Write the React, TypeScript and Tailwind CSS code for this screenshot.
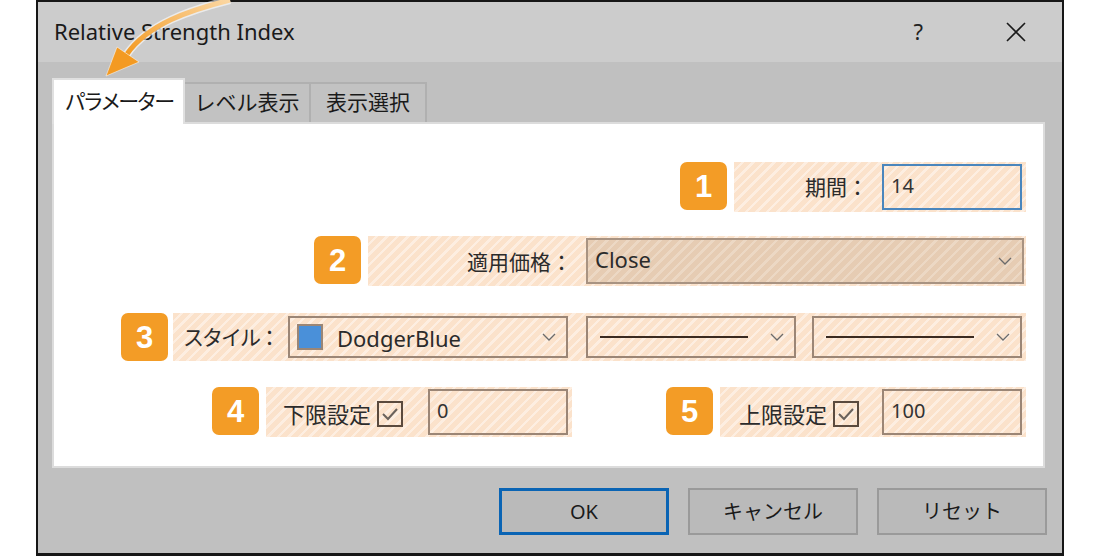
import React from 'react'

const font = "font-['Noto_Sans','Noto_Sans_CJK_JP',sans-serif]"

const hatch =
    'bg-[repeating-linear-gradient(135deg,#fbe2cb_0px,#fbe2cb_5px,#fdeee1_5px,#fdeee1_7.5px)]'
const hatchDark =
    'bg-[repeating-linear-gradient(135deg,#e6ccb3_0px,#e6ccb3_5px,#ecd8c4_5px,#ecd8c4_7.5px)]'

function Badge({ n }: { n: number }) {
    return (
        <div className="flex h-[48px] w-[47px] shrink-0 items-center justify-center rounded-[7px] bg-[#f39c26] text-[31px] font-bold leading-none text-white font-['Liberation_Sans',sans-serif]">
            {n}
        </div>
    )
}

function Chevron() {
    return (
        <svg width="14" height="8" viewBox="0 0 14 8" className="shrink-0">
            <path d="M1 1 L7 7 L13 1" fill="none" stroke="#6b6b6b" strokeWidth="1.3" />
        </svg>
    )
}

function Check() {
    return (
        <div className="flex h-[26px] w-[26px] shrink-0 items-center justify-center border-2 border-[#5a4a3e]">
            <svg width="18" height="14" viewBox="0 0 18 14">
                <path d="M2 7 L7 12 L16 2" fill="none" stroke="#6a625c" strokeWidth="2" />
            </svg>
        </div>
    )
}

function ValueBox({ value, blue }: { value: string; blue?: boolean }) {
    return (
        <div
            className={`flex h-[46px] w-[140px] shrink-0 items-start pl-[7px] pt-[8px] text-[20px] leading-[24px] text-[#333] ${
                blue ? 'border-2 border-[#4a86bd]' : 'border-2 border-[#9b8676]'
            }`}
        >
            {value}
        </div>
    )
}

function LineSelect() {
    return (
        <div className="flex h-[42px] w-[210px] shrink-0 items-center justify-between border-2 border-[#9b8676] pl-[12px] pr-[10px]">
            <div className="h-[2px] w-[148px] bg-[#3a2a20]" />
            <Chevron />
        </div>
    )
}

function TabButton({ label, active, width }: { label: string; active?: boolean; width: string }) {
    if (active) {
        return (
            <div className={`relative z-10 -mb-[2px] flex h-[46px] items-start justify-center border-2 border-b-0 border-[#e0e0e0] bg-white pt-[6px] text-[21px] tracking-[-3px] text-[#1a1a1a] ${width}`}>
                {label}
            </div>
        )
    }
    return (
        <div className={`flex h-[40px] items-start justify-center border-2 border-l-0 border-b-0 border-[#b0b0b0] bg-[#c2c2c2] pt-[3px] text-[21px] text-[#1a1a1a] ${width}`}>
            {label}
        </div>
    )
}

function Button({ label, primary }: { label: string; primary?: boolean }) {
    return (
        <div
            className={`flex h-[47px] w-[170px] items-center justify-center bg-[#bababa] text-[20px] text-[#1a1a1a] ${
                primary ? 'border-[3px] border-[#0a64b4]' : 'border-2 border-[#9a9a9a]'
            }`}
        >
            {label}
        </div>
    )
}

function Arrow() {
    return (
        <svg className="pointer-events-none absolute left-0 top-0" width="260" height="90" viewBox="0 0 260 90">
            <defs>
                <linearGradient id="arr" x1="1" y1="0" x2="0" y2="1">
                    <stop offset="0" stopColor="#fbd7a3" />
                    <stop offset="1" stopColor="#f39a22" />
                </linearGradient>
            </defs>
            <path d="M230 0 C 190 10, 148 24, 127 54" fill="none" stroke="#ffffff" strokeOpacity="0.6" strokeWidth="8" />
            <path d="M230 0 C 190 10, 148 24, 127 54" fill="none" stroke="url(#arr)" strokeWidth="5" />
            <path d="M106 76 L117 47 L139 62 Z" fill="#f39a22" stroke="#ffffff" strokeOpacity="0.5" strokeWidth="1" />
        </svg>
    )
}

export default function App() {
    return (
        <div className={`relative h-[556px] w-[1100px] bg-white pl-[36px] ${font}`}>
            <div className="flex h-[556px] w-[1028px] flex-col border-[2px] border-b-[3px] border-[#161616]">
                {/* Title bar */}
                <div className="flex h-[60px] shrink-0 items-center bg-[#cccccc] pl-[16px] text-[22px] text-[#1a1a1a]">
                    <span className="pb-[2px]">Relative Strength Index</span>
                    <span className="ml-auto mr-[82px] pb-[2px] text-[22px] text-[#222]">?</span>
                    <svg width="22" height="22" viewBox="0 0 22 22" className="mr-[35px]">
                        <path d="M2 2 L20 20 M20 2 L2 20" stroke="#1a1a1a" strokeWidth="1.6" />
                    </svg>
                </div>

                {/* Body */}
                <div className="flex flex-1 flex-col bg-[#c0c0c0] pl-[14px] pr-[15px] pt-[16px]">
                    <div className="flex items-end">
                        <TabButton label="パラメーター" active width="w-[133px]" />
                        <TabButton label="レベル表示" width="w-[126px]" />
                        <TabButton label="表示選択" width="w-[116px]" />
                    </div>

                    {/* Panel */}
                    <div className="flex h-[346px] w-[993px] flex-col border-2 border-[#dcdcdc] bg-white pr-[17px] pt-[38px] text-[21px] text-[#2b2b2b]">
                        {/* Row 1 */}
                        <div className="flex justify-end">
                            <Badge n={1} />
                            <div className={`ml-[7px] flex h-[50px] w-[292px] items-center justify-end pr-[4px] ${hatch}`}>
                                <span className="mr-[14px] whitespace-nowrap pt-[2px]">期間：</span>
                                <ValueBox value="14" blue />
                            </div>
                        </div>

                        {/* Row 2 */}
                        <div className="mt-[24px] flex justify-end">
                            <Badge n={2} />
                            <div className={`ml-[7px] flex h-[50px] w-[658px] items-center justify-end pr-[2px] ${hatch}`}>
                                <span className="mr-[14px] whitespace-nowrap pt-[4px]">適用価格：</span>
                                <div className={`flex h-[46px] w-[438px] items-center justify-between border-2 border-[#a89382] pl-[7px] pr-[10px] ${hatchDark}`}>
                                    <span className="pb-[4px] text-[22px] text-[#2b2b2b]">Close</span>
                                    <Chevron />
                                </div>
                            </div>
                        </div>

                        {/* Row 3 */}
                        <div className="mt-[27px] flex justify-end">
                            <Badge n={3} />
                            <div className={`ml-[5px] flex h-[48px] w-[853px] items-center pl-[10px] pr-[4px] ${hatch}`}>
                                <span className="shrink-0 whitespace-nowrap pt-[2px] tracking-[-2px]">スタイル：</span>
                                <div className="ml-auto flex h-[42px] w-[280px] shrink-0 items-center border-2 border-[#9b8676] pl-[7px] pr-[10px]">
                                    <div className="h-[26px] w-[26px] shrink-0 border-2 border-[#9b8676] bg-[#4a90d9]" />
                                    <span className="ml-[14px] whitespace-nowrap pt-[2px] text-[22px]">DodgerBlue</span>
                                    <div className="ml-auto">
                                        <Chevron />
                                    </div>
                                </div>
                                <div className="ml-[18px]">
                                    <LineSelect />
                                </div>
                                <div className="ml-[16px]">
                                    <LineSelect />
                                </div>
                            </div>
                        </div>

                        {/* Row 4 */}
                        <div className="mt-[26px] flex justify-end gap-[94px]">
                            <div className="flex">
                                <Badge n={4} />
                                <div className={`ml-[7px] flex h-[50px] w-[306px] items-center pl-[17px] pr-[4px] ${hatch}`}>
                                    <span className="whitespace-nowrap pt-[4px] text-[22px]">下限設定</span>
                                    <div className="ml-[6px] mt-[4px]">
                                        <Check />
                                    </div>
                                    <div className="ml-auto">
                                        <ValueBox value="0" />
                                    </div>
                                </div>
                            </div>
                            <div className="flex">
                                <Badge n={5} />
                                <div className={`ml-[7px] flex h-[50px] w-[306px] items-center pl-[19px] pr-[4px] ${hatch}`}>
                                    <span className="whitespace-nowrap pt-[4px] text-[22px]">上限設定</span>
                                    <div className="ml-[6px] mt-[4px]">
                                        <Check />
                                    </div>
                                    <div className="ml-auto">
                                        <ValueBox value="100" />
                                    </div>
                                </div>
                            </div>
                        </div>
                    </div>

                    {/* Buttons */}
                    <div className="mt-[20px] flex justify-end gap-[19px]">
                        <Button label="OK" primary />
                        <Button label="キャンセル" />
                        <Button label="リセット" />
                    </div>
                </div>
            </div>
            <Arrow />
        </div>
    )
}
